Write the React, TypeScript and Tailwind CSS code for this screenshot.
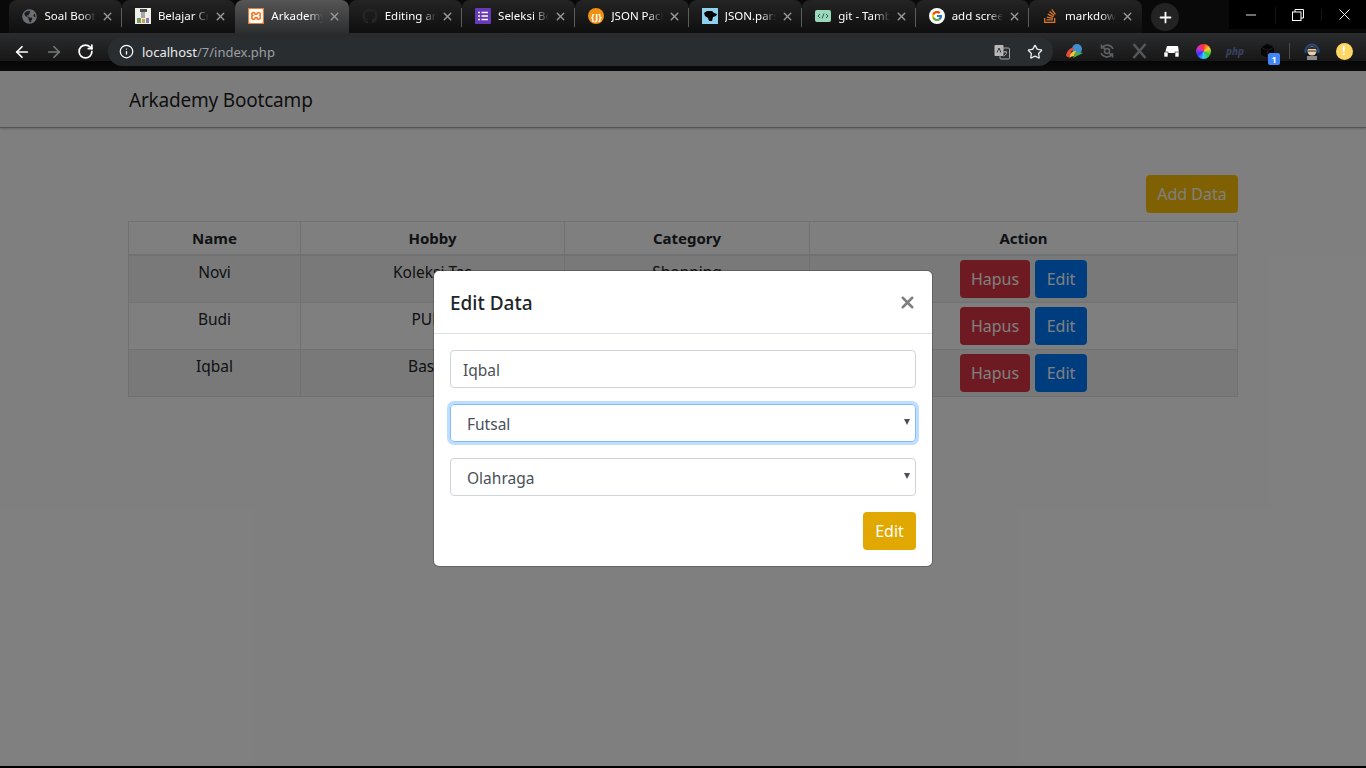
import { ArrowLeft, ArrowRight, Info, Minus, Plus, RotateCw, Star, X } from "lucide-react"
import { FaGithub, FaGlobeAmericas, FaStackOverflow } from "react-icons/fa"
import { FcGoogle } from "react-icons/fc"
import { SiXampp } from "react-icons/si"
import type { ReactNode } from "react"

const font = "font-['Noto_Sans','Open_Sans',sans-serif]"

const tabs: { title: string; icon: ReactNode; active?: boolean; sep?: boolean }[] = [
  { title: "Soal Bootcamp", icon: <FaGlobeAmericas className="h-[15px] w-[15px] text-[#6b6f73]" />, sep: true },
  {
    title: "Belajar Crud",
    icon: (
      <svg width="16" height="16" viewBox="0 0 16 16">
        <rect width="16" height="16" fill="#efefea" />
        <rect x="5" y="1" width="7" height="3" fill="#4a4d4f" />
        <rect x="6" y="4" width="4" height="6" fill="#a4a9a8" />
        <rect x="2" y="10" width="4" height="5" fill="#7d9a5c" />
        <rect x="7" y="11" width="3" height="4" fill="#c9a14f" />
        <rect x="11" y="10" width="3" height="5" fill="#8a7fae" />
      </svg>
    ),
  },
  {
    title: "Arkademy Bootcamp",
    active: true,
    icon: (
      <span className="flex h-4 w-4 items-center justify-center bg-[#f4792b]">
        <SiXampp className="h-[14px] w-[14px] text-white" />
      </span>
    ),
  },
  { title: "Editing arkademy", icon: <FaGithub className="h-4 w-4 text-[#222426]" />, sep: true },
  {
    title: "Seleksi Bootcamp",
    sep: true,
    icon: (
      <svg width="16" height="16" viewBox="0 0 16 16">
        <rect width="16" height="16" rx="1" fill="#673ab7" />
        <path d="M3 4.5h2M6.5 4.5h6.5M3 8h2M6.5 8h6.5M3 11.5h2M6.5 11.5h6.5" stroke="#fff" strokeWidth="1.6" />
      </svg>
    ),
  },
  {
    title: "JSON Package",
    sep: true,
    icon: (
      <span className="flex h-4 w-4 items-center justify-center rounded-full bg-[#f29111] text-[9px] font-bold leading-none text-white">
        {"{J}"}
      </span>
    ),
  },
  {
    title: "JSON.parse",
    sep: true,
    icon: (
      <svg width="16" height="16" viewBox="0 0 16 16">
        <rect width="16" height="16" fill="#8ed0ee" />
        <path d="M2 5 5 3h5l2 2 3 1-1 2-3 1-1 4H7L6 10 3 8Z" fill="#000" />
      </svg>
    ),
  },
  {
    title: "git - Tambah",
    sep: true,
    icon: (
      <svg width="16" height="16" viewBox="0 0 16 16">
        <rect y="2" width="16" height="12" rx="2" fill="#9ad8bd" />
        <path d="M5 6 3 8l2 2M11 6l2 2-2 2M9 5.5 7 10.5" stroke="#35564a" strokeWidth="1" fill="none" />
      </svg>
    ),
  },
  {
    title: "add screenshot",
    sep: true,
    icon: (
      <span className="flex h-4 w-4 items-center justify-center rounded-full bg-white">
        <FcGoogle className="h-3 w-3" />
      </span>
    ),
  },
  { title: "markdown", icon: <FaStackOverflow className="h-4 w-4 text-[#e0792b]" /> },
]

const rows = [
  { name: "Novi", hobby: "Koleksi Tas", category: "Shopping", striped: true },
  { name: "Budi", hobby: "PUBG", category: "Game", striped: false },
  { name: "Iqbal", hobby: "Basket", category: "Olahraga", striped: true },
]

function TabStrip() {
  return (
    <div className="flex h-[33px] bg-[#090909] pl-[8.5px]">
      {tabs.map((tab) => (
        <div
          key={tab.title}
          className={`relative flex h-[33px] w-[113.4px] shrink-0 items-center rounded-t-lg pb-[1px] pl-[13px] pr-[8px] ${
            tab.active ? "bg-gradient-to-b from-[#565656] to-[#2d2e30]" : "bg-gradient-to-b from-[#242424] to-[#0f0f0f]"
          }`}
        >
          <span className="flex w-[23px] shrink-0 items-center">{tab.icon}</span>
          <span className="min-w-0 flex-1 overflow-hidden whitespace-nowrap text-[11.5px] text-white [mask-image:linear-gradient(to_right,#000_70%,transparent)]">
            {tab.title}
          </span>
          <X className="ml-[5px] h-[13px] w-[13px] shrink-0 text-[#9a9a9a]" strokeWidth={2.5} />
          {tab.sep && <span className="absolute right-0 top-[8px] h-[19px] w-px bg-[#5c5c5c]" />}
        </div>
      ))}
      <div className="ml-[9px] mt-[3px] flex h-7 w-7 items-center justify-center rounded-full bg-[#232323]">
        <Plus className="h-[17px] w-[17px] text-white" strokeWidth={2.5} />
      </div>
      <div className="ml-auto flex h-[29px] w-[137px] items-center bg-black text-white">
        <span className="flex flex-1 justify-center border-r border-[#161616] pr-[2px]">
          <Minus className="h-[16px] w-[16px]" strokeWidth={1.3} />
        </span>
        <span className="flex flex-1 justify-center border-r border-[#161616] pr-[2px]">
          <svg width="12" height="12" viewBox="0 0 12 12" fill="none" stroke="#fff">
            <path d="M3 3V.5h8.5V9H9" />
            <rect x=".5" y="3" width="8.5" height="8.5" />
          </svg>
        </span>
        <span className="flex flex-1 justify-center">
          <X className="h-[19px] w-[19px]" strokeWidth={1.2} />
        </span>
      </div>
    </div>
  )
}

function Toolbar() {
  return (
    <div className="relative flex h-[38px] items-start bg-[linear-gradient(to_bottom,#2b2c2e_0,#171717_28px,#060606_28px,#0c0c0c_100%)] pt-1">
      <ArrowLeft className="ml-[13px] mt-[6px] h-[18px] w-[18px] text-white" strokeWidth={2.3} />
      <ArrowRight className="ml-[14px] mt-[6px] h-[18px] w-[18px] text-[#77797b]" strokeWidth={2.3} />
      <RotateCw className="ml-[14px] mt-[6px] h-[17px] w-[17px] text-white" strokeWidth={2.5} />
      <div className="ml-[14px] flex h-[29px] w-[945px] items-center rounded-full bg-[#2a2d30] pl-[11px]">
        <Info className="h-[15px] w-[15px] text-white" strokeWidth={2} />
        <span className="ml-[8px] pt-[2px] text-[13px] text-[#e8eaed]">
          localhost<span className="text-[#9aa0a6]">/7/index.php</span>
        </span>
        <svg className="ml-auto" width="16" height="16" viewBox="0 0 16 16">
          <rect x="0.5" y="1" width="9" height="11" rx="1" fill="#b9b9b9" />
          <rect x="6" y="4" width="9.5" height="11" rx="1" fill="none" stroke="#a8a8a8" />
          <path d="M3 8.5 5 4l2 4.5" stroke="#333" fill="none" />
          <path d="M9 8h4M11 7v1M9.500 12c2-.8 3-2 3.200-4" stroke="#a8a8a8" fill="none" />
        </svg>
        <Star className="ml-[17px] mr-[10px] h-[16px] w-[16px] text-[#e8eaed]" strokeWidth={2} />
      </div>
      <div className="ml-[6px] mt-[5px] flex items-center">
        <span className="flex w-[32px] justify-center">
          <svg width="18" height="16" viewBox="0 0 18 16">
            <circle cx="11" cy="6" r="5" fill="#3f8fd0" />
            <path d="M0 13C1 7 5 4 9 5c-2 1-4 3-4 5l3-1-4 6Z" fill="#e24c3a" />
            <path d="M4 14c0-4 3-6 6-6l-2 5Z" fill="#f5c72f" />
            <path d="m7 15 10-5c-2-1-6-1-8 0Z" fill="#4cae3f" />
          </svg>
        </span>
        <span className="flex w-[32px] justify-center">
          <svg width="16" height="16" viewBox="0 0 16 16" fill="none" stroke="#5e6062" strokeWidth="1.6">
            <path d="M3 4.500A6.500 6.500 0 0 1 14 6M13 11.500A6.500 6.500 0 0 1 2 10" />
            <path d="M2.500 1.500v3.500H6M13.500 14.500V11H10" />
            <circle cx="8" cy="8" r="2.500" />
          </svg>
        </span>
        <span className="flex w-[32px] justify-center">
          <svg width="15" height="16" viewBox="0 0 15 16" stroke="#55575a" strokeWidth="2.600" fill="none">
            <path d="m1.500 1 12 14M13.500 1l-12 14" />
          </svg>
        </span>
        <span className="flex w-[32px] justify-center">
          <svg width="15" height="12" viewBox="0 0 15 12">
            <path d="M3 1h11l1 7H1Z" fill="#fff" />
            <rect y="7" width="4" height="5" fill="#fff" stroke="#111" strokeWidth=".6" />
            <rect x="11" y="7" width="4" height="5" fill="#fff" stroke="#111" strokeWidth=".6" />
          </svg>
        </span>
        <span className="flex w-[32px] justify-center">
          <span className="h-[15px] w-[15px] rounded-full bg-[conic-gradient(#f33,#fc3,#3c3,#3cf,#33f,#c3c,#f33)]" />
        </span>
        <span className="flex w-[32px] justify-center text-[10px] font-bold italic leading-none text-[#3d4468]">php</span>
        <span className="relative flex w-[32px] justify-center">
          <svg width="15" height="16" viewBox="0 0 15 16">
            <path d="M7.500 .5 14.500 4v8l-7 3.500L.5 12V4Z" fill="#050505" stroke="#1f1f1f" />
            <path d="m.5 4 7 3.500 7-3.500M7.500 7.500v8" stroke="#1f1f1f" fill="none" />
          </svg>
          <span className="absolute left-[17px] top-[10px] flex h-[12px] w-[12px] items-center justify-center rounded-[2px] bg-[#4285f4] text-[9px] font-bold leading-none text-white">
            1
          </span>
        </span>
        <span className="ml-[6px] h-[16px] w-px bg-[#4a4a4a]" />
        <span className="ml-[6px] flex w-[32px] justify-center">
          <svg width="16" height="18" viewBox="0 0 16 18">
            <path d="M1.500 9a6.500 6.500 0 0 1 13 0" stroke="#1a4f86" strokeWidth="1.800" fill="none" />
            <rect x="0.500" y="7" width="2" height="4" fill="#1a4f86" />
            <rect x="13.500" y="7" width="2" height="4" fill="#1a4f86" />
            <circle cx="8" cy="9" r="4.500" fill="#edcdb0" />
            <path d="M3.500 7c1-3 8-3 9 0Z" fill="#3d2a20" />
            <path d="M4 9h8" stroke="#333" />
            <rect x="3" y="14" width="10" height="4" fill="#8b8b8b" />
          </svg>
        </span>
        <span className="flex w-[32px] justify-center">
          <span className="flex h-[17px] w-[17px] items-center justify-center rounded-full bg-[#fdd663] text-[12px] font-bold leading-none text-white">
            !
          </span>
        </span>
      </div>
    </div>
  )
}

function DataTable() {
  return (
    <table className="w-full table-fixed border-collapse text-[15.5px] text-[#212529]">
      <thead>
        <tr className="h-[33px] text-[15px]">
          <th className="w-[172px] border border-b-2 border-[#dee2e6] font-bold">Name</th>
          <th className="w-[264px] border border-b-2 border-[#dee2e6] font-bold">Hobby</th>
          <th className="w-[245px] border border-b-2 border-[#dee2e6] font-bold">Category</th>
          <th className="border border-b-2 border-[#dee2e6] font-bold">Action</th>
        </tr>
      </thead>
      <tbody>
        {rows.map((row) => (
          <tr key={row.name} className={row.striped ? "bg-black/5" : ""}>
            <td className="border border-[#dee2e6] pb-[16px] pt-[5px] text-center align-top">{row.name}</td>
            <td className="border border-[#dee2e6] pb-[16px] pt-[5px] text-center align-top">{row.hobby}</td>
            <td className="border border-[#dee2e6] pb-[16px] pt-[5px] text-center align-top">{row.category}</td>
            <td className="border border-[#dee2e6] px-0 py-[4px]">
              <div className="flex justify-center gap-[5px] text-[16px]">
                <button className="h-[38px] w-[70px] rounded bg-[#dc3545] text-white">Hapus</button>
                <button className="h-[38px] w-[52px] rounded bg-[#007bff] text-white">Edit</button>
              </div>
            </td>
          </tr>
        ))}
      </tbody>
    </table>
  )
}

function EditModal() {
  return (
    <div className="absolute left-[434px] top-[200px] w-[498px] rounded-[5px] bg-white text-[15.5px] text-[#495057] shadow-[0_0_0_1px_rgba(0,0,0,0.2)]">
      <div className="flex h-[63px] items-start justify-between border-b border-[#dee2e6] pl-4 pr-[15px] pt-[14px]">
        <h5 className="text-[19px] font-medium leading-[36px] text-[#212529]">Edit Data</h5>
        <X className="mt-[8px] h-[19px] w-[19px] text-[#7f7f7f]" strokeWidth={3.200} />
      </div>
      <form className="flex flex-col gap-4 p-4">
        <input
          readOnly
          defaultValue="Iqbal"
          className="h-[38px] w-full rounded border border-[#ced4da] px-3 pt-[2px] text-[#495057]"
        />
        <div className="relative">
          <select className="h-[38px] w-full appearance-none rounded border border-[#80bdff] pl-4 pt-[4px] text-[#495057] shadow-[0_0_0_3px_rgba(0,123,255,0.25)]">
            <option>Futsal</option>
          </select>
          <span className="absolute right-[6px] top-[15px] h-0 w-0 border-x-[3.5px] border-t-[6px] border-x-transparent border-t-[#495057]" />
        </div>
        <div className="relative">
          <select className="h-[38px] w-full appearance-none rounded border border-[#ced4da] pl-4 pt-[4px] text-[#495057]">
            <option>Olahraga</option>
          </select>
          <span className="absolute right-[6px] top-[15px] h-0 w-0 border-x-[3.5px] border-t-[6px] border-x-transparent border-t-[#495057]" />
        </div>
        <div className="flex justify-end">
          <button type="button" className="h-[38px] w-[53px] rounded bg-[#e0a800] text-[16px] text-white">
            Edit
          </button>
        </div>
      </form>
    </div>
  )
}

export default function App() {
  return (
    <div className={`flex h-[768px] flex-col overflow-hidden bg-black ${font}`}>
      <TabStrip />
      <Toolbar />
      <div className="relative flex-1 bg-white">
        <nav className="flex h-[57px] items-center border-b border-[#a8a8a8] bg-[#f8f9fa] pl-[129px] pt-[3px] shadow-[0_1px_2px_rgba(0,0,0,0.2)]">
          <span className="text-[19px] tracking-[-0.2px] text-black/90">Arkademy Bootcamp</span>
        </nav>
        <div className="mx-[128px] mt-[47px]">
          <div className="mb-2 flex justify-end">
            <button className="h-[38px] w-[92px] rounded bg-[#ffc107] text-[16px] text-white">Add Data</button>
          </div>
          <DataTable />
        </div>
        <div className="absolute inset-0 bg-black/50" />
        <EditModal />
      </div>
      <div className="h-[2px] bg-black" />
    </div>
  )
}
